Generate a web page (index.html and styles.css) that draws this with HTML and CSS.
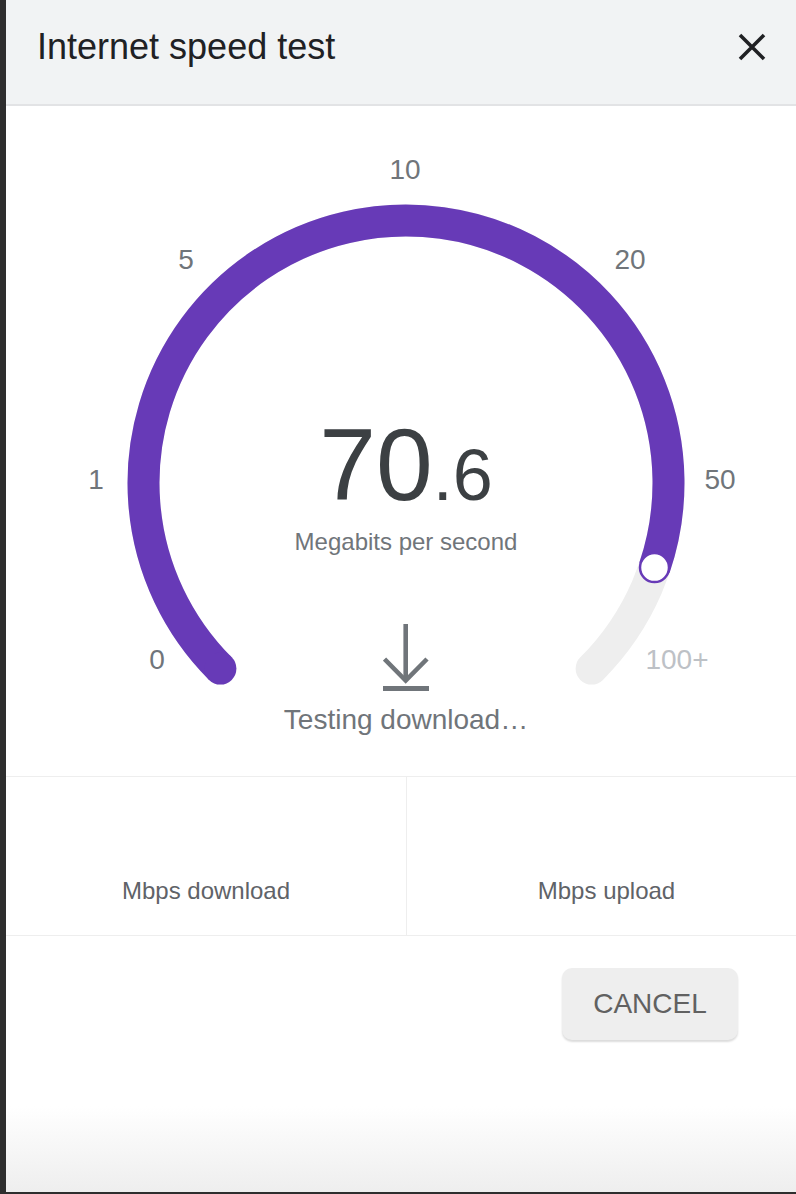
FILE: index.html
```html
<!DOCTYPE html>
<html lang="en">
<head>
<meta charset="utf-8">
<title>Internet speed test</title>
<link rel="stylesheet" href="styles.css">
</head>
<body>
<div class="edge"></div>
<div class="dialog">
  <header class="header">
    <h1 class="title">Internet speed test</h1>
    <button class="close" aria-label="Close">
      <svg width="28" height="28" viewBox="0 0 28 28"><path d="M2 2 L26 26 M26 2 L2 26" stroke="#202124" stroke-width="3.6" fill="none"/></svg>
    </button>
  </header>

  <section class="gauge">
    <svg class="dial" width="800" height="670" viewBox="0 0 800 670">
      <path d="M214.38 562.62 A262.5 262.5 0 1 1 585.62 562.62" fill="none" stroke="#eeeeee" stroke-width="32" stroke-linecap="round"/>
      <path d="M214.38 562.62 A262.5 262.5 0 1 1 648.5 461.6" fill="none" stroke="#673ab7" stroke-width="32"/>
      <circle cx="214.38" cy="562.62" r="16" fill="#673ab7"/>
      <circle cx="648.5" cy="461.6" r="14.5" fill="#ffffff" stroke="#673ab7" stroke-width="2.5"/>
    </svg>
    <span class="tick" style="left:399px;top:64px">10</span>
    <span class="tick" style="left:180px;top:154px">5</span>
    <span class="tick" style="left:624px;top:154px">20</span>
    <span class="tick" style="left:90px;top:374px">1</span>
    <span class="tick" style="left:714px;top:374px">50</span>
    <span class="tick" style="left:151px;top:554px">0</span>
    <span class="tick tick-max" style="left:671px;top:554px">100+</span>

    <div class="readout">
      <div class="value">70<span class="decimal">.6</span></div>
      <div class="unit">Megabits per second</div>
      <svg class="dl-icon" width="46" height="68" viewBox="0 0 46 68">
        <path d="M22.7 0 V56" stroke="#70757a" stroke-width="4.6" fill="none"/>
        <path d="M1.5 35 L22.7 56.5 L44 35" stroke="#70757a" stroke-width="4.6" fill="none"/>
        <rect x="0" y="62" width="46" height="5" fill="#70757a"/>
      </svg>
      <div class="status">Testing download…</div>
    </div>
  </section>

  <section class="results">
    <div class="cell"><span class="cell-label">Mbps download</span></div>
    <div class="cell"><span class="cell-label">Mbps upload</span></div>
  </section>

  <footer class="footer">
    <button class="cancel">CANCEL</button>
  </footer>
</div>
</body>
</html>
```
FILE: styles.css
```css
html, body {
  margin: 0;
  padding: 0;
  overflow: hidden;
  height: 1194px;
  background: #2e2e2e;
}
body {
  display: flex;
  align-items: flex-start;
  font-family: "Liberation Sans", Arial, sans-serif;
}
.edge {
  width: 6px;
  flex: 0 0 6px;
  height: 1194px;
  background: #2e2e2e;
}
.dialog {
  flex: 0 0 800px;
  width: 800px;
  height: 1192px;
  background: #ffffff;
  display: flex;
  flex-direction: column;
}
.header {
  box-sizing: border-box;
  background: #f1f3f4;
  border-bottom: 2px solid #e2e3e5;
  height: 106px;
  display: flex;
  align-items: center;
  justify-content: space-between;
  padding: 0 40px 10px 31px;
}
.title {
  margin: 0;
  font-size: 36px;
  line-height: 36px;
  font-weight: normal;
  color: #202124;
}
.close {
  border: 0;
  padding: 0;
  background: transparent;
  width: 28px;
  height: 28px;
  display: flex;
}
.gauge {
  position: relative;
  height: 670px;
  flex: 0 0 670px;
}
.dial {
  position: absolute;
  left: 0;
  top: 0;
}
.tick {
  position: absolute;
  transform: translate(-50%, -50%);
  font-size: 28px;
  line-height: 28px;
  color: #70757a;
  white-space: nowrap;
}
.tick-max {
  color: #bdc1c6;
}
.readout {
  position: relative;
  display: flex;
  flex-direction: column;
  align-items: center;
  padding-top: 308px;
}
.value {
  font-size: 102px;
  line-height: 102px;
  color: #3c4043;
}
.decimal {
  font-size: 72px;
  line-height: 72px;
}
.unit {
  margin-top: 14px;
  font-size: 24px;
  line-height: 24px;
  color: #70757a;
}
.dl-icon {
  display: block;
  margin-top: 70px;
}
.status {
  margin-top: 14px;
  font-size: 28px;
  line-height: 28px;
  color: #70757a;
}
.results {
  display: grid;
  grid-template-columns: 1fr 1fr;
  border-top: 1px solid #eeeeee;
  border-bottom: 1px solid #eeeeee;
  height: 160px;
  box-sizing: border-box;
  flex: 0 0 160px;
}
.cell {
  display: flex;
  align-items: flex-end;
  justify-content: center;
  padding-bottom: 32px;
}
.cell + .cell {
  border-left: 1px solid #eeeeee;
}
.cell-label {
  font-size: 24px;
  line-height: 24px;
  color: #5f6368;
}
.footer {
  flex: 1 1 auto;
  display: flex;
  justify-content: flex-end;
  align-items: flex-start;
  padding: 32px 68px 0 0;
  background: linear-gradient(to bottom, #ffffff 0, #ffffff 170px, #eeeeee 256px);
}
.cancel {
  width: 176px;
  height: 72px;
  border: 0;
  border-radius: 10px;
  background: #eeeeee;
  box-shadow: 0 2px 2px rgba(0, 0, 0, 0.14);
  font-family: "Liberation Sans", Arial, sans-serif;
  font-size: 28px;
  color: #616161;
  padding: 0;
}
```
